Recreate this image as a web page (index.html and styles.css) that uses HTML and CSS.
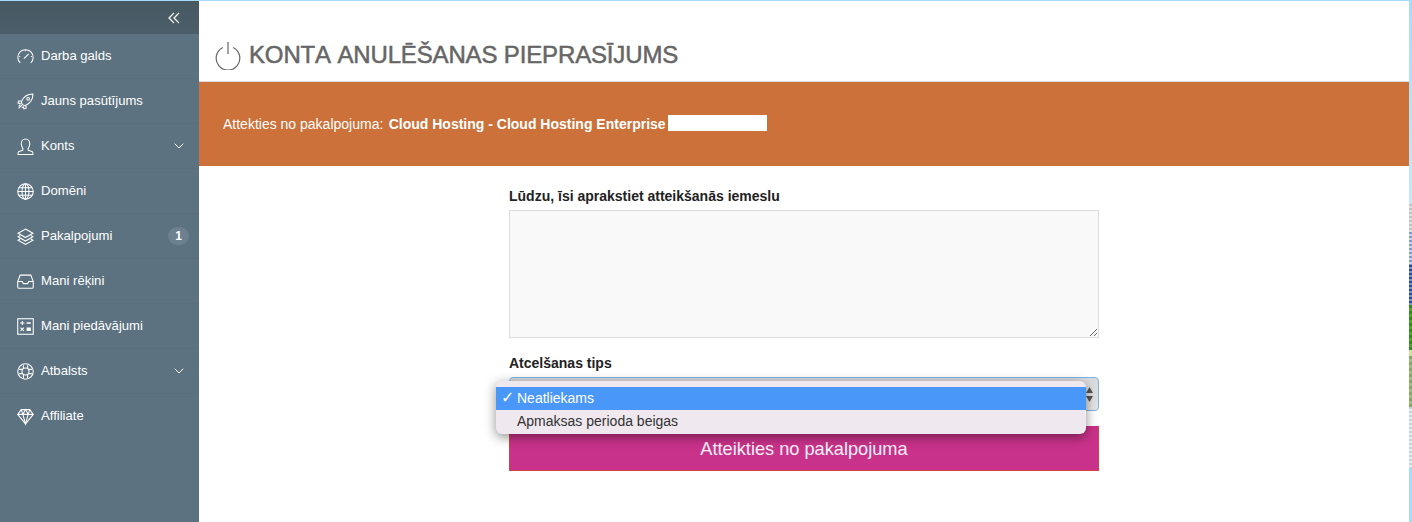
FILE: index.html
```html
<!DOCTYPE html>
<html>
  <head>
    <title>Konta anulēšanas pieprasījums</title>
    <link rel="stylesheet" href="styles.css">
  </head>
  <body>
    <div class="sidebar">
      <div class="sidebar-top">
        <svg class="collapse" width="12" height="12" viewBox="0 0 12 12"><path d="M6 1 1 6l5 5M11 1 6 6l5 5"/></svg>
      </div>
      <a class="nav-item">
        <svg class="ico" viewBox="0 0 16 16"><path d="M3 14A7.2 7.2 0 1 1 13 14"/><path d="M6.500 10 11 5.500"/><path d="M2 8h1M13 8h1M8 2v1"/></svg>
        <span>Darba galds</span>
      </a>
      <a class="nav-item">
        <svg class="ico" viewBox="0 0 16 16"><path d="M5 11 4 8.500c2-5 6-7.500 11-7.500 0 5-2.500 9-7.500 11z"/><circle cx="10.500" cy="5.500" r="1.300"/><path d="M4 7.500H1.500L1 9.500l2.500.5M8.500 12v2.500l-2 .5-.5-2.500M4.500 11.500 1.500 14.500M3 11l-1.500 1.500M5.500 13l-1 1"/></svg>
        <span>Jauns pasūtījums</span>
      </a>
      <a class="nav-item">
        <svg class="ico" viewBox="0 0 16 16"><path d="M5.500 10C4.500 8.500 4 7.200 4 5.500 4 3 5.700 1 8 1s4 2 4 4.500c0 1.700-.5 3-1.500 4.500v1.500l4 1.500c.4.200.5.500.5 2.500H1c0-2 .1-2.300.5-2.500l4-1.500z"/></svg>
        <span>Konts</span>
        <svg class="chev" width="10" height="6" viewBox="0 0 10 6"><path d="m.7.7 4.300 4.300L9.300.7"/></svg>
      </a>
      <a class="nav-item">
        <svg class="ico" viewBox="0 0 16 16"><circle cx="8" cy="8" r="7.300"/><ellipse cx="8" cy="8" rx="3.300" ry="7.300"/><path d="M8 .7v14.600M.7 8h14.600M1.700 4.500h12.600M1.700 11.500h12.600"/></svg>
        <span>Domēni</span>
      </a>
      <a class="nav-item">
        <svg class="ico" viewBox="0 0 16 16"><path d="M8 1 15 5 8 9 1 5z"/><path d="M3 7 1 8.300l7 4 7-4L13 7M3 10.300 1 11.500l7 4 7-4-2-1.200"/></svg>
        <span>Pakalpojumi</span>
        <b class="badge">1</b>
      </a>
      <a class="nav-item">
        <svg class="ico" viewBox="0 0 16 16"><path d="M.7 8 3 2h10l2.300 6v5.500a.8.8 0 0 1-.8.8h-13a.8.8 0 0 1-.8-.8z"/><path d="M.7 8h4.300l1 2h4l1-2h4.300"/></svg>
        <span>Mani rēķini</span>
      </a>
      <a class="nav-item">
        <svg class="ico" viewBox="0 0 16 16"><rect x=".7" y=".7" width="14.600" height="14.600"/><path d="M3 4.700h4M5 2.800v3.800M3.300 9l3.200 3.200M6.500 9l-3.200 3.200"/><path class="solid" d="M9 4h4v1.400H9zM9 9h4v3.200H9z"/></svg>
        <span>Mani piedāvājumi</span>
      </a>
      <a class="nav-item">
        <svg class="ico" viewBox="0 0 16 16"><circle cx="8" cy="8" r="7.300"/><circle cx="8" cy="8" r="3.300"/><path d="M6 2v3.200M10 2v3.200M6 10.800V14M10 10.800V14M2 6h3.200M2 10h3.200M10.800 6H14M10.800 10H14"/></svg>
        <span>Atbalsts</span>
        <svg class="chev" width="10" height="6" viewBox="0 0 10 6"><path d="m.7.7 4.300 4.300L9.300.7"/></svg>
      </a>
      <a class="nav-item">
        <svg class="ico" viewBox="0 0 16 16"><path d="M4 1.500h8L15.300 6 8 15 .7 6z"/><path d="M.7 6h14.600M5.500 6 8 15l2.500-9M4 1.500 5.500 6 8 1.500 10.500 6 12 1.500"/></svg>
        <span>Affiliate</span>
      </a>
    </div>

    <div class="main">
      <h1 class="page-title">
        <svg class="power" width="26" height="29" viewBox="0 0 26 29"><path d="M8 6.500a11.800 11.800 0 1 0 10 0M13 1v12"/></svg>
        Konta anulēšanas pieprasījums
      </h1>
      <div class="banner">
        <span>Attekties no pakalpojuma: <b>Cloud Hosting - Cloud Hosting Enterprise</b></span>
        <i class="redact"></i>
      </div>
      <form class="cancel-form">
        <label>Lūdzu, īsi aprakstiet atteikšanās iemeslu</label>
        <textarea></textarea>
        <label class="type-label">Atcelšanas tips</label>
        <div class="select-wrap">
          <div class="fake-select">
            <svg width="9" height="17" viewBox="0 0 9 17"><path d="M4.500 1 8 7H1zM4.500 16 8 10H1z"/></svg>
          </div>
          <ul class="dropdown">
            <li class="selected">Neatliekams</li>
            <li>Apmaksas perioda beigas</li>
          </ul>
        </div>
        <button type="button">Atteikties no pakalpojuma</button>
      </form>
    </div>

    <!-- sliver of the desktop behind the window -->
    <div class="desktop">
      <div class="d-sky"></div>
      <div class="d-gray"></div>
      <div class="d-lilac"></div>
      <div class="d-navy"></div>
      <div class="d-green"></div>
      <div class="d-lime"></div>
      <div class="d-olive"></div>
      <div class="d-pale"></div>
      <div class="d-sky2"></div>
    </div>
  </body>
</html>
```

FILE: styles.css
```css
* {
  box-sizing: border-box;
}
html,
body {
  height: 100%;
}
body {
  display: flex;
  margin: 0;
  height: 522px;
  overflow: hidden;
  border-top: 1px solid #a5dcfb;
  font-family: "Liberation Sans", Arial, sans-serif;
  background: #fff;
}

/* sidebar */
.sidebar {
  width: 199px;
  flex: none;
  background: #5c7280;
  color: #fff;
}
.sidebar-top {
  display: flex;
  justify-content: flex-end;
  align-items: center;
  height: 33px;
  padding-right: 19px;
  background: linear-gradient(#465963, #4c5e69);
}
.collapse path {
  fill: none;
  stroke: #fff;
  stroke-width: 1.2;
}
.nav-item {
  display: flex;
  align-items: center;
  height: 45px;
  padding: 0 10px 0 17px;
  border-bottom: 1px solid #5a6f7c;
  font-size: 13.100px;
  color: #fff;
}
.nav-item:last-child {
  border-bottom: none;
}
.nav-item span {
  flex: 1;
  margin-left: 7px;
  padding-bottom: 2px;
}
.ico {
  width: 17px;
  height: 17px;
  flex: none;
  overflow: visible;
  fill: none;
  stroke: #fff;
  stroke-width: 1;
}
.ico .solid {
  fill: #fff;
  stroke: none;
}
.chev {
  margin-right: 5px;
  fill: none;
  stroke: #fff;
  stroke-width: 1;
}
.badge {
  width: 21px;
  height: 18px;
  border-radius: 9px;
  background: #6c8090;
  font-size: 12px;
  line-height: 18px;
  text-align: center;
}

/* main column */
.main {
  flex: 1;
  min-width: 0;
}
.page-title {
  display: flex;
  align-items: flex-end;
  gap: 8px;
  height: 81px;
  margin: 0;
  padding: 0 0 12px 16px;
  border-bottom: 1px solid #ddd;
  font-size: 24px;
  font-weight: normal;
  font-kerning: none;
  letter-spacing: -0.15px;
  -webkit-text-stroke: 0.5px #666;
  line-height: 28px;
  color: #666;
  text-transform: uppercase;
}
.power {
  margin-bottom: -1px;
  fill: none;
  stroke: #666;
  stroke-width: 1.2;
}
.banner {
  display: flex;
  align-items: center;
  height: 84px;
  padding-left: 24px;
  background: #cb7139;
  color: #fff;
  font-size: 14px;
}
.banner b {
  margin-left: 1.500px;
}
.redact {
  width: 99px;
  height: 16px;
  margin: 0 0 2px 2px;
  background: #fff;
}

/* form */
.cancel-form {
  display: flex;
  flex-direction: column;
  width: 590px;
  margin: 22px 0 0 310px;
}
.cancel-form label {
  height: 19px;
  font-size: 14px;
  font-weight: bold;
  color: #222;
}
.cancel-form textarea {
  height: 128px;
  margin-top: 3px;
  border: 1px solid #ddd;
  background: #f9f9f9;
}
.cancel-form .type-label {
  margin-top: 17px;
}
.select-wrap {
  position: relative;
  margin-top: 3px;
}
.fake-select {
  display: flex;
  justify-content: flex-end;
  align-items: center;
  height: 34px;
  padding-right: 4px;
  border: 1px solid #7db4e6;
  border-radius: 4px;
  background: linear-gradient(#d9dadb, #e6e6e6);
}
.fake-select path {
  fill: #555;
}
.dropdown {
  position: absolute;
  top: 4px;
  left: -13px;
  width: 590px;
  margin: 0;
  padding: 6px 0 1px;
  border-radius: 6px;
  background: #efe8ef;
  box-shadow: 0 3px 12px rgba(0, 0, 0, 0.45);
  list-style: none;
  font-size: 14px;
  color: #333;
}
.dropdown li {
  height: 23px;
  padding-left: 21px;
  line-height: 23px;
  white-space: nowrap;
}
.dropdown .selected {
  position: relative;
  background: #4a97fa;
  color: #fff;
}
.dropdown .selected::before {
  content: "✓";
  position: absolute;
  left: 5px;
  top: -1px;
  font-family: "DejaVu Sans", sans-serif;
  font-size: 16px;
  font-weight: bold;
}
.cancel-form button {
  height: 45px;
  margin-top: 15px;
  padding: 2px 0 0;
  border: 1px solid #d9403f;
  border-top: none;
  background: #c9328a;
  color: #fbf0f8;
  font-family: inherit;
  font-size: 18.200px;
}

/* desktop strip on the right */
.desktop {
  width: 3px;
  flex: none;
  display: flex;
  flex-direction: column;
}
.d-sky {
  height: 203px;
  background: linear-gradient(#a5dcfb, #c9e7fa);
}
.d-gray {
  height: 28px;
  background: repeating-linear-gradient(#bcc4c8 0 2px, #dde1e3 2px 4px);
}
.d-lilac {
  height: 33px;
  background: repeating-linear-gradient(#7f9cd0 0 2px, #c9d5e8 2px 4px);
}
.d-navy {
  height: 40px;
  background: repeating-linear-gradient(#27498f 0 2px, #7f97c4 2px 4px);
}
.d-green {
  height: 45px;
  background: repeating-linear-gradient(#2f8a1f 0 3px, #4da52f 3px 6px);
}
.d-lime {
  height: 6px;
  background: #cfe39a;
}
.d-olive {
  height: 51px;
  background: repeating-linear-gradient(#84a864 0 3px, #9cbf7d 3px 6px);
}
.d-pale {
  height: 61px;
  background: repeating-linear-gradient(#bfd3d8 0 2px, #e6eced 2px 4px);
}
.d-sky2 {
  flex: 1;
  background: #a5dcfb;
}
```
